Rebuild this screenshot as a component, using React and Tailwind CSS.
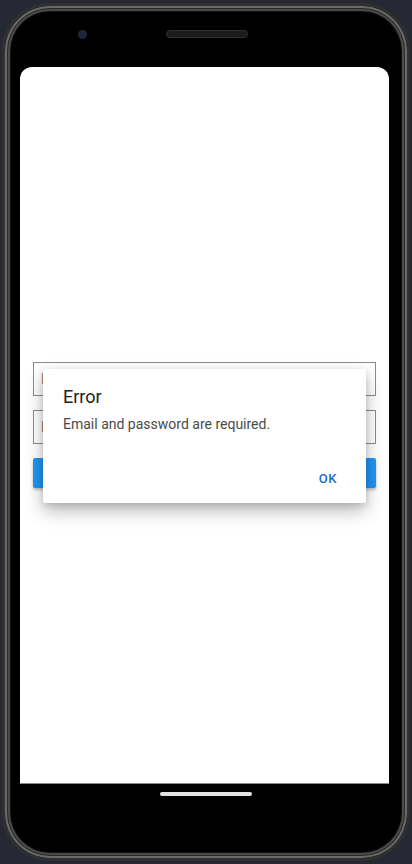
// App.jsx - login screen with error dialog inside a phone frame

const PhoneFrame = ({ children }) => {
  return (
    <div className="w-[412px] h-[864px] bg-[#262833] pt-[3px] px-[2px] overflow-hidden">
      <div className="relative h-[858px] rounded-[48px] bg-black border-[3px] border-[#303030] shadow-[inset_0_0_0_2px_#6a6a6a,inset_0_0_0_3px_#2a2a2a,inset_0_0_0_5px_#4a4a4a,inset_0_0_0_6px_#111] flex flex-col">
        {/* Top bezel: camera + speaker */}
        <div className="h-[61px] relative shrink-0">
          <div className="absolute left-[73px] top-[24px] w-[9px] h-[9px] rounded-full bg-[#1c2240] border border-[#2e2e36]" />
          <div className="absolute left-[161px] top-[24px] w-[82px] h-[8px] rounded-full bg-[#1b1b1b] border border-[#303030]" />
        </div>
        {/* Screen */}
        <div className="ml-[15px] mr-[18px] h-[717px] bg-white rounded-t-[12px] border-b border-[#8a8a8a] relative overflow-hidden">
          {children}
        </div>
        {/* Home indicator */}
        <div className="flex justify-center pt-[8px]">
          <div className="w-[92px] h-[4px] rounded-full bg-[#e2e2e2]" />
        </div>
      </div>
    </div>
  );
};

const LoginForm = () => {
  return (
    <div className="h-full flex flex-col justify-center px-[13px] gap-[14px]">
      <div className="h-[34px] border border-[#8c8c8c] flex items-center px-[7px] text-[14px] text-[#777]">
        Email
      </div>
      <div className="h-[34px] border border-[#8c8c8c] flex items-center px-[7px] text-[14px] text-[#777]">
        Password
      </div>
      <div className="h-[30px] bg-[#2196F3] rounded-[2px] shadow-[0_2px_3px_rgba(0,0,0,0.25)] flex items-center justify-center text-white text-[14px] font-medium">
        LOGIN
      </div>
    </div>
  );
};

const ErrorDialog = ({ title, message }) => {
  return (
    <div className="absolute left-[23px] top-[302px] w-[323px] bg-white rounded-[2px] shadow-[0_8px_18px_rgba(0,0,0,0.28),0_2px_6px_rgba(0,0,0,0.12)] pt-[16px] pb-[6px]">
      <h2 className="px-[20px] text-[18px] leading-[24px] text-[#202020]">{title}</h2>
      <p className="px-[20px] mt-[5px] text-[14px] leading-[20px] text-[#4a4a4a]">{message}</p>
      <div className="mt-[27px] h-[36px] flex items-center justify-end pr-[29px]">
        <span className="text-[13px] font-medium tracking-[0.04em] text-[#1d6fc0]">OK</span>
      </div>
    </div>
  );
};

export default function App() {
  return (
    <div className="font-['Roboto',sans-serif]">
      <PhoneFrame>
        <LoginForm />
        <ErrorDialog title="Error" message="Email and password are required." />
      </PhoneFrame>
    </div>
  );
}
